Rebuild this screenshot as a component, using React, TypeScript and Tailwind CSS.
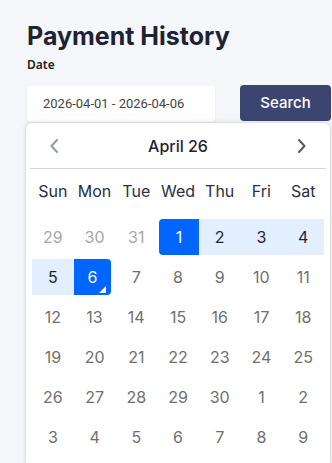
import React from "react";

type Day = { n: number; kind: "prev" | "cur" | "next" | "start" | "range" | "end" };

const weekdays = ["Sun", "Mon", "Tue", "Wed", "Thu", "Fri", "Sat"];

const weeks: Day[][] = [
  [
    { n: 29, kind: "prev" },
    { n: 30, kind: "prev" },
    { n: 31, kind: "prev" },
    { n: 1, kind: "start" },
    { n: 2, kind: "range" },
    { n: 3, kind: "range" },
    { n: 4, kind: "range" },
  ],
  [
    { n: 5, kind: "range" },
    { n: 6, kind: "end" },
    ...[7, 8, 9, 10, 11].map((n) => ({ n, kind: "cur" as const })),
  ],
  [12, 13, 14, 15, 16, 17, 18].map((n) => ({ n, kind: "cur" as const })),
  [19, 20, 21, 22, 23, 24, 25].map((n) => ({ n, kind: "cur" as const })),
  [
    ...[26, 27, 28, 29, 30].map((n) => ({ n, kind: "cur" as const })),
    { n: 1, kind: "next" },
    { n: 2, kind: "next" },
  ],
  [3, 4, 5, 6, 7, 8, 9].map((n) => ({ n, kind: "next" as const })),
];

function DayCell({ day }: { day: Day }) {
  if (day.kind === "start") {
    return (
      <div className="h-[36px] pl-[2px]">
        <div className="h-full flex items-center justify-center bg-[#0066ff] text-white rounded-l-[4px]">
          {day.n}
        </div>
      </div>
    );
  }
  if (day.kind === "end") {
    return (
      <div className="h-[36px] pr-[4px]">
        <div className="relative h-full flex items-center justify-center bg-[#0066ff] text-white rounded-r-[4px]">
          {day.n}
          {/* end-of-range marker */}
          <svg className="absolute right-[5px] bottom-[2px]" width="7" height="7" viewBox="0 0 7 7">
            <polygon points="7,0 7,7 0,7" fill="#ffffff" />
          </svg>
        </div>
      </div>
    );
  }
  if (day.kind === "range") {
    return (
      <div className="h-[36px] flex items-center justify-center bg-[#e3efff] text-[#1f2433]">
        {day.n}
      </div>
    );
  }
  return (
    <div
      className={
        "h-[36px] flex items-center justify-center " +
        (day.kind === "prev" ? "text-[#a8a8a8]" : "text-[#707070]")
      }
    >
      {day.n}
    </div>
  );
}

export default function App() {
  return (
    <div className="relative h-[463px] overflow-hidden bg-[#f4f6fa] pl-[27px] pt-[20px]">
      <h1 className="font-['Inter',sans-serif] text-[25px] leading-[32px] font-bold text-[#1f2233]">
        Payment History
      </h1>
      <div className="mt-[5px] font-['Noto_Sans',sans-serif] text-[12px] leading-[16px] font-semibold text-[#222]">
        Date
      </div>

      <div className="mt-[12px] flex items-start gap-[25px]">
        <div className="mt-px h-[36px] w-[188px] shrink-0 flex items-center rounded-[4px] bg-white pl-[16px] shadow-[0_1px_2px_rgba(0,0,0,0.08)] font-['Roboto',sans-serif] text-[13px] text-[#444]">
          2026-04-01 - 2026-04-06
        </div>
        <button className="h-[36px] w-[91px] shrink-0 rounded-[4px] bg-[#3c4570] font-['Inter',sans-serif] text-[15px] font-medium text-white">
          Search
        </button>
      </div>

      {/* date picker popover */}
      <div className="absolute left-[26px] top-[123px] w-[304px] rounded-[6px] bg-white pb-[12px] shadow-[0_0_5px_rgba(0,0,0,0.18)] font-['Inter',sans-serif]">
        <div className="mx-[4px] flex h-[46px] items-center justify-between border-b border-[#d4d6da] px-[20px]">
          <svg width="8" height="14" viewBox="0 0 8 14" fill="none">
            <path d="M7 1L1.5 7L7 13" stroke="#8e9ab0" strokeWidth="2" strokeLinecap="round" strokeLinejoin="round" />
          </svg>
          <span className="text-[16px] font-medium text-[#1e2235]">April 26</span>
          <svg width="8" height="14" viewBox="0 0 8 14" fill="none">
            <path d="M1 1L6.5 7L1 13" stroke="#545b66" strokeWidth="2" strokeLinecap="round" strokeLinejoin="round" />
          </svg>
        </div>

        <div className="grid h-[44px] grid-cols-7 items-center px-[6px] text-[16px] text-[#2b2f3e]">
          {weekdays.map((w) => (
            <div key={w} className="text-center">
              {w}
            </div>
          ))}
        </div>

        <div className="mt-[6px] grid grid-cols-7 gap-y-[4px] px-[6px] text-[16px]">
          {weeks.flat().map((d, i) => (
            <DayCell key={i} day={d} />
          ))}
        </div>
      </div>
    </div>
  );
}
